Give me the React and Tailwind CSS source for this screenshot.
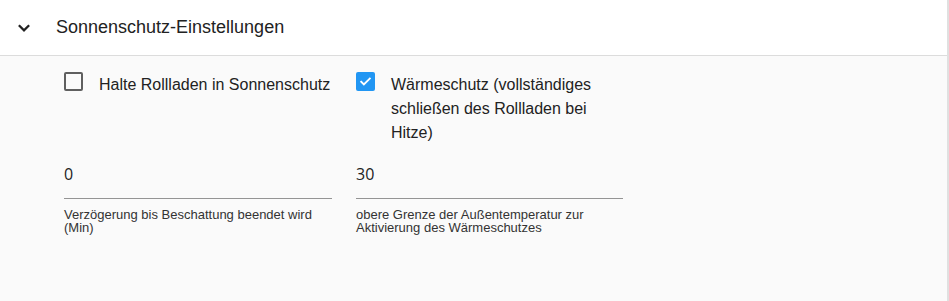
import React, { useState } from 'react';

const font = { fontFamily: '"Liberation Sans", Arial, sans-serif' };

function Check({ checked, onChange, label }) {
  return (
    <label className="flex items-start cursor-pointer">
      <span
        onClick={onChange}
        className={`w-[19px] h-[19px] shrink-0 rounded-[2px] flex items-center justify-center ${
          checked ? 'bg-[#2196f3]' : 'border-2 border-[#5f5f5f]'
        }`}
      >
        {checked && (
          <svg width="13" height="13" viewBox="0 0 24 24" fill="none" stroke="white" strokeWidth="3.4" strokeLinecap="square">
            <path d="M4 12.5l5 5L20 6.5" />
          </svg>
        )}
      </span>
      <span className="ml-[16px] text-[16px] leading-[24px] text-[#222] mt-[1px]">{label}</span>
    </label>
  );
}

function Field({ value, helper }) {
  return (
    <div>
      <div className="border-b border-[#949494] pb-[11px]">
        <input
          defaultValue={value}
          className="w-full bg-transparent outline-none text-[16px] leading-[24px] text-[#222] mt-[2px]"
          style={{ fontFamily: '"Open Sans", "Noto Sans", sans-serif' }}
        />
      </div>
      <p className="mt-[9px] pr-[20px] text-[13px] leading-[13px] text-[#333]">{helper}</p>
    </div>
  );
}

export default function App() {
  const [keep, setKeep] = useState(false);
  const [heat, setHeat] = useState(true);

  return (
    <div className="w-full h-[301px] border-r-2 border-[#e0e0e0] bg-[#fafafa]" style={font}>
      <div className="h-[56px] bg-white border-b border-[#dcdcdc] flex items-center">
        <svg className="ml-[16px]" width="16" height="16" viewBox="0 0 24 24" fill="none" stroke="#222" strokeWidth="3.4" strokeLinecap="square">
          <path d="M5.5 9l6.5 6.5L18.5 9" />
        </svg>
        <h2 className="ml-[24px] text-[18px] text-[#222]">Sonnenschutz-Einstellungen</h2>
      </div>

      <div className="pl-[64px] pt-[16px] grid grid-cols-[268px_267px] gap-x-[24px]">
        <Check checked={keep} onChange={() => setKeep(!keep)} label="Halte Rollladen in Sonnenschutz" />
        <Check checked={heat} onChange={() => setHeat(!heat)} label="Wärmeschutz (vollständiges schließen des Rollladen bei Hitze)" />

        <div className="mt-[15px]">
          <Field value="0" helper="Verzögerung bis Beschattung beendet wird (Min)" />
        </div>
        <div className="mt-[15px]">
          <Field value="30" helper="obere Grenze der Außentemperatur zur Aktivierung des Wärmeschutzes" />
        </div>
      </div>
    </div>
  );
}
